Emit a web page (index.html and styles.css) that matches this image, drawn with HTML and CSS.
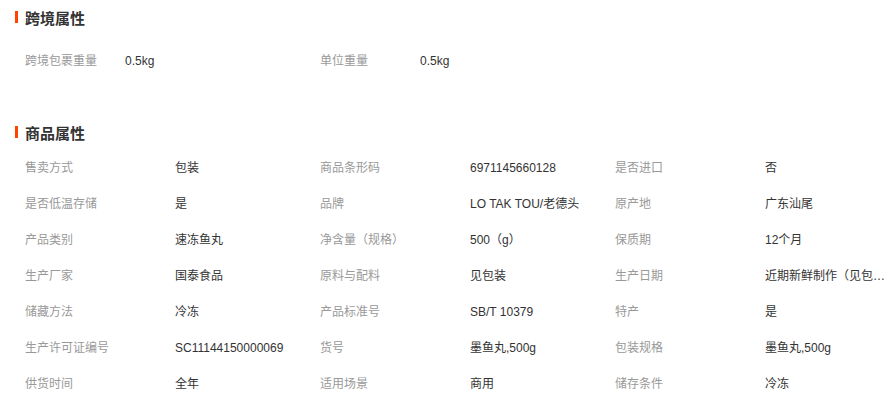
FILE: index.html
```html
<!DOCTYPE html>
<html lang="zh-CN">
<head>
    <meta charset="UTF-8">
    <meta name="viewport" content="width=device-width, initial-scale=1.0">
    <title>商品属性</title>
    <link rel="stylesheet" href="styles.css">
</head>
<body>
    <div class="attr-section">
        <h3 class="attr-title">跨境属性</h3>
        <div class="cross-list">
            <div class="cross-row">
                <span class="label cross-label">跨境包裹重量</span>
                <span class="value cross-value">0.5kg</span>
                <span class="label cross-label">单位重量</span>
                <span class="value cross-value">0.5kg</span>
            </div>
        </div>
    </div>

    <div class="attr-section attr-section-goods">
        <h3 class="attr-title">商品属性</h3>
        <div class="goods-list">
            <div class="goods-row">
                <span class="label">售卖方式</span><span class="value">包装</span>
                <span class="label">商品条形码</span><span class="value">6971145660128</span>
                <span class="label">是否进口</span><span class="value">否</span>
            </div>
            <div class="goods-row">
                <span class="label">是否低温存储</span><span class="value">是</span>
                <span class="label">品牌</span><span class="value">LO TAK TOU/老德头</span>
                <span class="label">原产地</span><span class="value">广东汕尾</span>
            </div>
            <div class="goods-row">
                <span class="label">产品类别</span><span class="value">速冻鱼丸</span>
                <span class="label">净含量（规格）</span><span class="value">500（g）</span>
                <span class="label">保质期</span><span class="value">12个月</span>
            </div>
            <div class="goods-row">
                <span class="label">生产厂家</span><span class="value">国泰食品</span>
                <span class="label">原料与配料</span><span class="value">见包装</span>
                <span class="label">生产日期</span><span class="value">近期新鲜制作（见包装）</span>
            </div>
            <div class="goods-row">
                <span class="label">储藏方法</span><span class="value">冷冻</span>
                <span class="label">产品标准号</span><span class="value">SB/T 10379</span>
                <span class="label">特产</span><span class="value">是</span>
            </div>
            <div class="goods-row">
                <span class="label">生产许可证编号</span><span class="value">SC11144150000069</span>
                <span class="label">货号</span><span class="value">墨鱼丸,500g</span>
                <span class="label">包装规格</span><span class="value">墨鱼丸,500g</span>
            </div>
            <div class="goods-row">
                <span class="label">供货时间</span><span class="value">全年</span>
                <span class="label">适用场景</span><span class="value">商用</span>
                <span class="label">储存条件</span><span class="value">冷冻</span>
            </div>
        </div>
    </div>
</body>
</html>
```

FILE: styles.css
```css
body {
    margin: 0;
    padding: 0;
    background: #fff;
    font-family: "Liberation Sans", "Noto Sans CJK SC", sans-serif;
    font-size: 12px;
    color: #333;
    overflow: hidden;
}
.attr-section-goods {
    margin-top: 36px;
}
.attr-title {
    display: flex;
    align-items: center;
    gap: 7px;
    margin: 0;
    padding-left: 15px;
    height: 34px;
    font-size: 15px;
    font-weight: bold;
    color: #333;
}
.attr-title::before {
    content: "";
    display: block;
    width: 3px;
    height: 12px;
    background: #ff4400;
}
.cross-list {
    padding: 9px 0 0 25px;
}
.cross-row, .goods-row {
    display: flex;
    height: 36px;
    line-height: 36px;
    white-space: nowrap;
}
.goods-list {
    padding: 1px 0 0 25px;
}
.label {
    color: #999;
    width: 150px;
    flex-shrink: 0;
}
.value {
    color: #333;
    width: 122px;
    margin-right: 23px;
    flex-shrink: 0;
    overflow: hidden;
    text-overflow: ellipsis;
}
.cross-label {
    width: 100px;
}
.cross-value {
    width: 195px;
    margin-right: 0;
}
```
